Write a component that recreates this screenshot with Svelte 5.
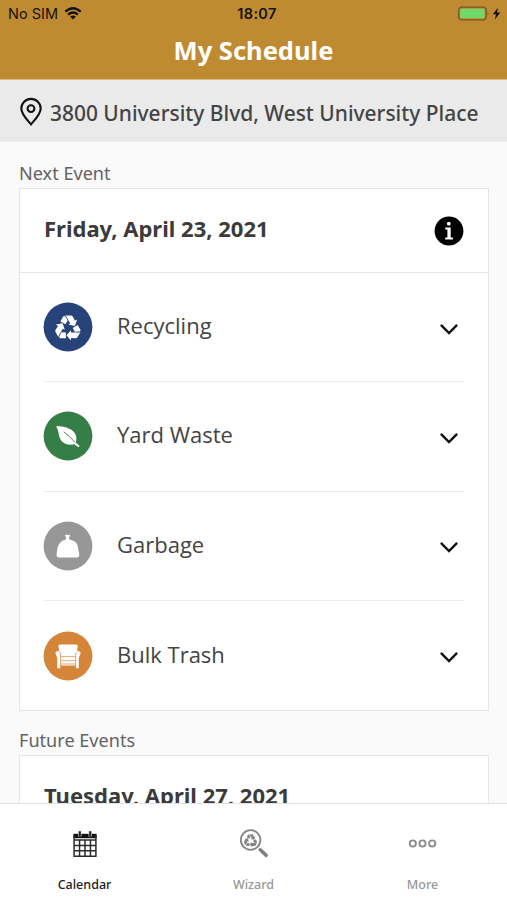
<script>
  const events = [
    { name: 'Recycling', icon: 'recycle', color: '#28437a' },
    { name: 'Yard Waste', icon: 'leaf', color: '#367e48' },
    { name: 'Garbage', icon: 'bag', color: '#979797' },
    { name: 'Bulk Trash', icon: 'chair', color: '#d48537' }
  ];
</script>

{#snippet recycleMark()}
  {#each [0, 120, 240] as angle}
    <g transform="rotate({angle})">
      <path d="M-3-12.7H3Q4.3-12.7 5-11.3L7-7.5 9.2-8.7 6.9-2.2.2-3.6 2.2-4.7-.8-10.2Q-1.6-11.9-3-12.7Z" />
      <path d="M-4.2-12.1Q-2.6-11.9-1.6-10.1L-.3-7.7-2.6-4-7.6-6.8-5.2-11Q-4.8-11.8-4.2-12.1Z" />
    </g>
  {/each}
{/snippet}

<div class="screen">
  <header>
    <div class="status">
      <div class="carrier">
        <span>No SIM</span>
        <svg width="18" height="13" viewBox="0 0 18 13" fill="none" stroke="#111" stroke-width="2.3">
          <path d="M1.3 4.7Q9-2.2 16.7 4.7M4.1 7.7Q9 3.4 13.9 7.7" />
          <path d="M6.1 9.6Q9 7.2 11.9 9.6L9 12.5Z" fill="#111" stroke="none" />
        </svg>
      </div>
      <span class="time">18:07</span>
      <svg class="battery" width="44" height="16" viewBox="0 0 44 16">
        <rect x=".7" y="1.2" width="27.4" height="12.6" rx="3" fill="none" stroke="#79571f" stroke-width="1.3" />
        <rect x="2.2" y="2.7" width="24.4" height="9.6" rx="1.3" fill="#70d76b" />
        <path d="M29.6 5.2Q31.2 7.5 29.6 9.8Z" fill="#79571f" />
        <path d="M40 1.7L34.8 8.3H38L36.9 13.4 42.3 6.5H39Z" fill="#111" />
      </svg>
    </div>
    <h1>My Schedule</h1>
  </header>

  <div class="address">
    <svg width="24" height="30" viewBox="0 0 24 30" fill="none" stroke="#111" stroke-width="2.1">
      <path d="M12 27.3C8.2 22.9 2.3 17.5 2.3 11.6a9.7 9.7 0 0 1 19.4 0C21.7 17.5 15.8 22.9 12 27.3Z" />
      <circle cx="12" cy="11.6" r="3.4" />
    </svg>
    <span>3800 University Blvd, West University Place</span>
  </div>

  <main>
    <h2>Next Event</h2>
    <section class="card">
      <div class="date">
        <span class="day">Friday, April 23, 2021</span>
        <svg width="30" height="30" viewBox="0 0 30 30">
          <circle cx="15" cy="15" r="14.4" fill="#000" />
          <circle cx="14.8" cy="7.7" r="1.9" fill="#fff" />
          <path d="M11.3 11.5H16.7V21.4H18.9V23.4H11.2V21.4H13.4V13.4H11.3Z" fill="#fff" />
        </svg>
      </div>
      <div class="rows">
        {#each events as event}
          <div class="row">
            <svg class="badge" width="50" height="50" viewBox="-25 -25 50 50">
              <circle r="24.4" fill={event.color} />
              <g fill="#fff">
                {#if event.icon === 'recycle'}
                  <g transform="translate(0 1.2)">{@render recycleMark()}</g>
                {:else if event.icon === 'leaf'}
                  <path d="M-12-9.8C-4.8-10.2 4.6-8 7.6-1.6 9 2.2 8.2 4.6 7.8 6.4L11.7 9.9 10.4 11.3 6.1 8.2C2.2 9.2-2.6 8.6-5.8 5.7-10 1.4-8.5-5-12-9.8Z" />
                  <path d="M-4.3-4.2Q1-.5 7 6.3" fill="none" stroke={event.color} stroke-width=".9" />
                {:else if event.icon === 'bag'}
                  <path d="M-3.3-11.3Q-1.7-10.8-.5-11.6 1-10.8 2.3-11.2L1-8.2 1.4-6.4C5-5.6 7.6-4.4 8.8-2.4 10-.4 9.8 1.6 10.4 4L11.3 8.2Q11.5 11.4 8.5 11.4H-8.8Q-11.8 11.4-11.4 8.2L-10.8 4C-10.6 1-9.6-1.4-7.9-3.2-6.2-5-4.4-5.9-2.2-6.4L-1.9-8.2Z" />
                {:else}
                  <path d="M-9.4-8.8Q-10.2-11.5-7.6-11.4H7.8Q10.4-11.5 9.6-8.8L9.2-4.9Q12.8-5.2 12.6-2.4L10.8 2V12.2H7.8V9.6H-7.6V12.2H-10.8V2L-12.5-2.4Q-12.7-5.2-9-4.9Z" />
                  <path d="M-8.8-4.7Q-7-3.6-7.4.6V10M9-4.7Q7.2-3.6 7.6.6V10M-7.2.6H7.5M-7.2 4.7H7.5M-7.2 8H7.5" fill="none" stroke={event.color} stroke-width=".7" />
                {/if}
              </g>
            </svg>
            <span class="name">{event.name}</span>
            <svg class="chevron" width="20" height="14" viewBox="0 0 20 14" fill="none" stroke="#111" stroke-width="2.4">
              <path d="M1.9 2.9L10 11.1 18.1 2.9" />
            </svg>
          </div>
        {/each}
      </div>
    </section>
    <h2 class="future">Future Events</h2>
    <section class="card">
      <div class="date"><span class="day">Tuesday, April 27, 2021</span></div>
    </section>
  </main>

  <nav>
    <div class="tab active">
      <svg width="30" height="30" viewBox="-15 -15 30 30">
        <path d="M-11.6-10.2H11.6V-5.8H-11.6Z" fill="#111" />
        <path d="M-10.9-9V12.2H10.9V-9M-10.9-4H10.9M-10.9 1.4H10.9M-10.9 6.8H10.9M-5.45-4V12.2M0-4V12.2M5.45-4V12.2" fill="none" stroke="#2c2c2c" stroke-width="1.5" />
        <path d="M-5.2-12.8V-7.4M5.2-12.8V-7.4" stroke="#ccc" stroke-width="3.4" />
        <path d="M-5.2-12.8V-7.4M5.2-12.8V-7.4" stroke="#222" stroke-width="2" />
      </svg>
      <span>Calendar</span>
    </div>
    <div class="tab">
      <svg width="30" height="30" viewBox="-15 -15 30 30" fill="#858585">
        <circle cx="-3.4" cy="-4" r="9.8" fill="none" stroke="#858585" stroke-width="1.8" />
        <g transform="translate(-3.4 -3.2) scale(.52)">{@render recycleMark()}</g>
        <path d="M6.2 5.8L12.2 11.4" stroke="#808080" stroke-width="3.5" stroke-linecap="round" />
      </svg>
      <span>Wizard</span>
    </div>
    <div class="tab">
      <svg width="30" height="30" viewBox="-14.5 -14.5 30 30" fill="none" stroke="#8d8d8d" stroke-width="1.9">
        <circle cx="-9.7" r="3.1" /><circle r="3.1" /><circle cx="9.7" r="3.1" />
      </svg>
      <span>More</span>
    </div>
  </nav>
</div>

<style>
  .screen {
    width: 507px;
    height: 900px;
    overflow: hidden;
    display: flex;
    flex-direction: column;
    background: #fafafa;
    color: #3b3b3b;
    font-family: 'Noto Sans', 'Open Sans', sans-serif;
  }
  svg { display: block; flex: none; }
  header {
    height: 80px;
    flex: none;
    background: #bf8b32;
    border-bottom: 1px solid #d6b981;
    box-sizing: border-box;
  }
  .status {
    height: 27px;
    display: grid;
    grid-template-columns: 1fr auto 1fr;
    align-items: center;
    padding: 0 5px 0 8px;
    color: #15120c;
    font: 14.5px/27px Inter, sans-serif;
  }
  .carrier { display: flex; align-items: center; gap: 6px; }
  .time { font-weight: 600; letter-spacing: .35px; padding-left: 4px; }
  .battery { justify-self: end; }
  h1 {
    margin: 5px 0 0;
    text-align: center;
    color: #fff;
    font-size: 25.5px;
    line-height: 37px;
    font-weight: 700;
  }
  .address {
    height: 62px;
    flex: none;
    display: flex;
    align-items: center;
    gap: 7px;
    padding: 2px 0 0 19px;
    box-sizing: border-box;
    background: #eaeaea;
    color: #444;
    font-size: 20.95px;
    font-weight: 500;
    white-space: nowrap;
  }
  .address span { padding-top: 2px; }
  main { flex: 1; min-height: 0; overflow: hidden; padding: 15px 18px 0 19px; }
  h2 {
    margin: 0;
    height: 31px;
    font-size: 18.1px;
    line-height: 32px;
    font-weight: 400;
    color: #636363;
  }
  .future { margin-top: 13px; }
  .card { background: #fff; border: 1px solid #e5e5e5; box-sizing: border-box; }
  .date {
    height: 83px;
    display: flex;
    align-items: center;
    justify-content: space-between;
    padding: 0 24px;
    border-bottom: 1px solid #e8e8e8;
  }
  .day { font-size: 22px; line-height: 30px; font-weight: 700; padding-bottom: 5px; white-space: nowrap; }
  .rows { padding: 0 24px; }
  .row {
    height: 109.3px;
    box-sizing: border-box;
    display: flex;
    align-items: center;
    border-bottom: 1px solid #ebebeb;
  }
  .row:last-child { border: 0; }
  .badge { margin-left: -1px; }
  .name {
    margin-left: 24px;
    flex: 1;
    font-family: 'Open Sans', 'Noto Sans', sans-serif;
    font-size: 22px;
    line-height: 30px;
    padding-bottom: 4px;
    color: #444;
  }
  .chevron { margin: 3px 5px 0 0; }
  nav {
    height: 97px;
    flex: none;
    box-sizing: border-box;
    display: grid;
    grid-template-columns: repeat(3, 169px);
    border-top: 1px solid #e2e2e2;
    background: #fff;
  }
  .tab {
    display: flex;
    flex-direction: column;
    align-items: center;
    padding-top: 25px;
    color: #979797;
    font-size: 12.5px;
    line-height: 18px;
    font-weight: 500;
  }
  .tab span { margin-top: 17px; }
  .active { color: #222; }
</style>
